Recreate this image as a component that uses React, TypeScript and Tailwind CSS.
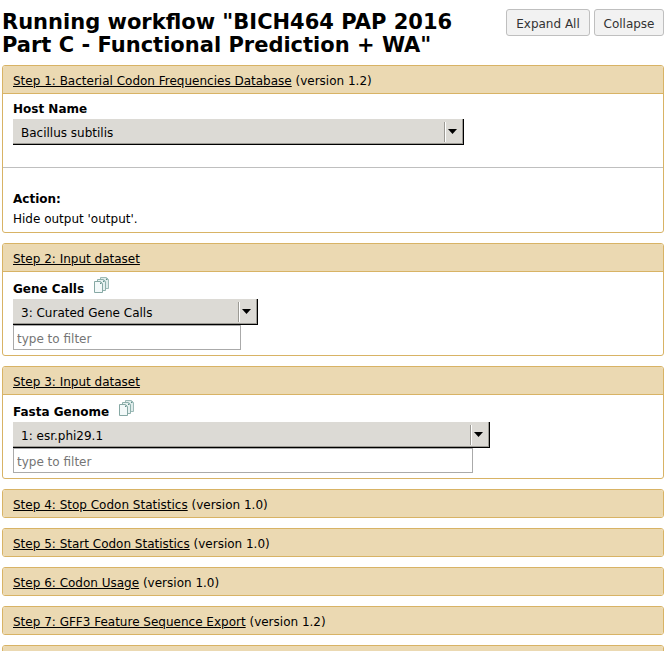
import type { ReactNode } from "react";

function CopyIcon() {
  return (
    <svg width="16" height="16" viewBox="0 0 16 16" aria-hidden="true">
      <path d="M6.500 .5h6l2 2v9h-8z" fill="#dfeceb" stroke="#9dbab7" />
      <path d="M12 1v2h2z" fill="#5f8f89" />
      <path d="M3.500 2.500h6l2 2v9h-8z" fill="#e6f1f0" stroke="#8fb0ac" />
      <path d="M9 3v2h2z" fill="#5f8f89" />
      <path d="M.5 4.500h6l2 2v9h-8z" fill="#f3f9f9" stroke="#86a8a4" />
      <path d="M6 5v2h2z" fill="#5f8f89" />
    </svg>
  );
}

type StepProps = { title?: string; version?: string; children?: ReactNode };

function Step({ title, version, children }: StepProps) {
  return (
    <section className="overflow-hidden rounded-[3px] border border-[#d8b365]">
      <div className="h-[27px] bg-[#ebd9b2] px-[10px] leading-[30px]">
        {title && (
          <a href="#" className="underline">
            {title}
          </a>
        )}
        {version && <span> (version {version})</span>}
      </div>
      {children && <div className="border-t border-[#d8b365]">{children}</div>}
    </section>
  );
}

type SelectProps = { id: string; value: string; width: string };

function Select({ id, value, width }: SelectProps) {
  return (
    <div className={"relative h-[26px] max-w-full " + width}>
      <select
        id={id}
        className="block h-full w-full appearance-none border-r border-b border-black bg-[#dcdad5] pt-[2px] pr-6 pl-2 text-black shadow-[inset_-1px_-1px_0_#9c9a94]"
      >
        <option>{value}</option>
      </select>
      <span className="pointer-events-none absolute top-[3px] right-[18px] h-5 w-[2px] border-r border-l border-r-white border-l-[#9c9a94]" />
      <svg
        className="pointer-events-none absolute top-[10px] right-[7px]"
        width="9"
        height="5"
        viewBox="0 0 9 5"
        aria-hidden="true"
      >
        <path d="M0 0h9L4.500 5z" fill="#000" />
      </svg>
    </div>
  );
}

type DatasetProps = { id: string; label: string; value: string; width: string; filterWidth: string };

function Dataset({ id, label, value, width, filterWidth }: DatasetProps) {
  return (
    <div className="px-[10px] py-[5px]">
      <div className="flex h-[22px] items-start gap-[10px]">
        <label htmlFor={id} className="pt-1 leading-4 font-bold">
          {label}
        </label>
        <button type="button" aria-label="Multiple datasets">
          <CopyIcon />
        </button>
      </div>
      <Select id={id} value={value} width={width} />
      <input
        type="text"
        aria-label={"Filter " + label}
        placeholder="type to filter"
        className={
          "block h-[25px] max-w-full border border-[#aaaaaa] bg-white px-[3px] pt-[2px] placeholder:text-[#757575] " +
          filterWidth
        }
      />
    </div>
  );
}

export default function App() {
  return (
    <main className="h-screen overflow-hidden bg-white pr-[5px] pl-[2px] font-['DejaVu_Sans',Verdana,sans-serif] text-[12px] text-black">
      <header className="flex items-start justify-between gap-4 pt-[9px] pb-[8px]">
        <h1 className="pt-[2px] text-[21px] leading-[23px] font-bold">
          Running workflow "BICH464 PAP 2016 Part C - Functional Prediction + WA"
        </h1>
        <div className="flex shrink-0 gap-1">
          <button type="button" className="h-[27px] w-[84px] rounded-[3px] border border-[#bfbfbf] bg-[#f2f2f2] pt-[2px] text-[#333333]">
            Expand All
          </button>
          <button type="button" className="h-[27px] w-[70px] rounded-[3px] border border-[#bfbfbf] bg-[#f2f2f2] pt-[2px] text-[#333333]">
            Collapse
          </button>
        </div>
      </header>
      <div className="flex flex-col gap-[10px]">
        <Step title="Step 1: Bacterial Codon Frequencies Database" version="1.2">
          <div className="px-[10px] pt-[7px] pb-[22px]">
            <label htmlFor="host" className="mb-[2px] block leading-4 font-bold">
              Host Name
            </label>
            <Select id="host" value="Bacillus subtilis" width="w-[451px]" />
          </div>
          <div className="border-t border-[#bfbfbf] px-[10px] pt-[21px] pb-[3px] leading-5">
            <p className="font-bold">Action:</p>
            <p>Hide output 'output'.</p>
          </div>
        </Step>
        <Step title="Step 2: Input dataset">
          <Dataset id="genes" label="Gene Calls" value="3: Curated Gene Calls" width="w-[245px]" filterWidth="w-[228px]" />
        </Step>
        <Step title="Step 3: Input dataset">
          <Dataset id="genome" label="Fasta Genome" value="1: esr.phi29.1" width="w-[477px]" filterWidth="w-[460px]" />
        </Step>
        <Step title="Step 4: Stop Codon Statistics" version="1.0" />
        <Step title="Step 5: Start Codon Statistics" version="1.0" />
        <Step title="Step 6: Codon Usage" version="1.0" />
        <Step title="Step 7: GFF3 Feature Sequence Export" version="1.2" />
        <Step />
      </div>
    </main>
  );
}
